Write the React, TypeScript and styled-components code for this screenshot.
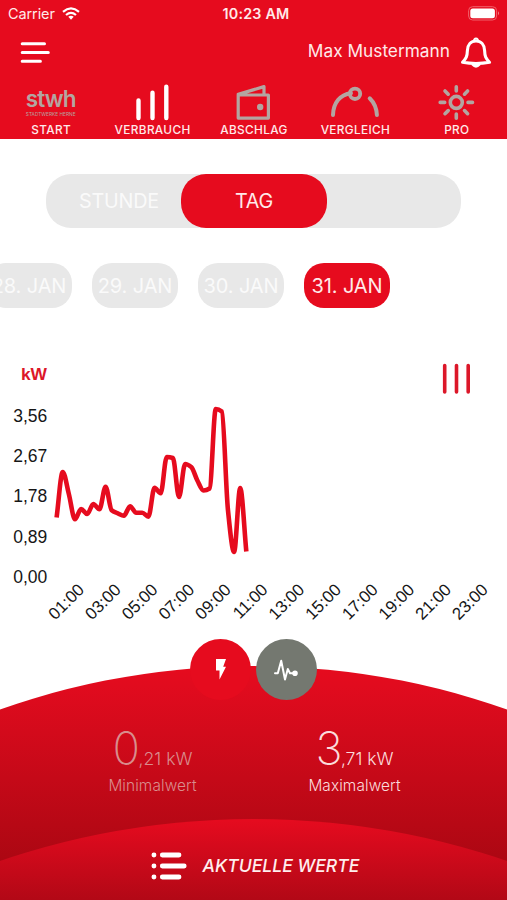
import React from "react";
import styled, { createGlobalStyle, css } from "styled-components";

const RED = "#e60b1e";
const MUTED = "#b3a5a1";
const TRACK = "#e8e8e8";

const GlobalStyle = createGlobalStyle`
  * { box-sizing: border-box; }
  body { margin: 0; background: #fff; }
`;

const Screen = styled.main`
  width: 507px;
  height: 900px;
  display: flex;
  flex-direction: column;
  overflow: hidden;
  background: #fff;
  font-family: Inter, "Liberation Sans", sans-serif;
`;

const Header = styled.header`
  height: 139px;
  flex: none;
  background: ${RED};
  color: #ffe9e9;
`;

const StatusBar = styled.div`
  height: 27px;
  padding: 0 7px 0 8px;
  display: grid;
  grid-template-columns: 1fr auto 1fr;
  align-items: center;
  font-size: 14.5px;
  line-height: 27px;
`;

const Carrier = styled.div`
  display: flex;
  align-items: center;
  gap: 7px;
  letter-spacing: -0.1px;
`;

const Clock = styled.div`
  font-weight: 600;
  font-size: 14.3px;
  letter-spacing: 0.2px;
  padding-left: 4px;
`;

const Battery = styled.svg`
  justify-self: end;
`;

const TitleBar = styled.div`
  height: 51px;
  padding: 0 14px 0 20px;
  display: flex;
  align-items: center;
`;

const UserName = styled.div`
  margin-left: auto;
  margin-right: 9px;
  font-size: 17.3px;
  line-height: 48px;
  height: 51px;
  letter-spacing: 0;
`;

const Tabs = styled.nav`
  height: 61px;
  display: grid;
  grid-template-columns: repeat(5, 1fr);
`;

const Tab = styled.div`
  display: flex;
  flex-direction: column;
  align-items: center;
`;

const Logo = styled.div`
  height: 43px;
  padding-top: 6px;
  display: flex;
  flex-direction: column;
  align-items: center;
  color: ${MUTED};
`;

const LogoName = styled.div`
  height: 27px;
  font-size: 22.5px;
  line-height: 30px;
  font-weight: 600;
  letter-spacing: -0.9px;
`;

const LogoCaption = styled.div`
  height: 6px;
  font-size: 4.8px;
  line-height: 6px;
  white-space: nowrap;
`;

const TabLabel = styled.span`
  font-size: 11.8px;
  font-weight: 500;
  line-height: 14px;
  margin-top: 2px;
  letter-spacing: 0.35px;
  padding-left: 1px;
  white-space: nowrap;
`;

const Segments = styled.div`
  flex: none;
  width: 415px;
  height: 54px;
  margin: 35px 0 0 46px;
  display: grid;
  grid-template-columns: 135px 146px 1fr;
  border-radius: 25px;
  background: ${TRACK};
`;

const Segment = styled.div<{ $active?: boolean }>`
  display: flex;
  align-items: center;
  justify-content: center;
  font-size: 19.8px;
  color: #fafafa;
  border-radius: 25px;
  letter-spacing: -0.2px;
  ${(p) =>
    p.$active
      ? css`
          background: ${RED};
          color: #ffe9e9;
        `
      : css`
          padding-left: 11px;
        `}
`;

const Days = styled.div`
  flex: none;
  height: 45px;
  margin: 35px 0 0 -14px;
  display: flex;
  gap: 20px;
`;

const Day = styled.div<{ $active?: boolean }>`
  flex: none;
  width: 86px;
  height: 45px;
  border-radius: 20px;
  display: flex;
  align-items: center;
  justify-content: center;
  white-space: nowrap;
  font-size: 20px;
  letter-spacing: -0.1px;
  background: ${(p) => (p.$active ? RED : TRACK)};
  color: ${(p) => (p.$active ? "#ffe9e9" : "#fafafa")};
`;

const Chart = styled.svg`
  flex: none;
  display: block;
  margin-top: 42px;
  font-family: "Liberation Sans", Arial, sans-serif;
`;

const Toggles = styled.div`
  flex: none;
  height: 61px;
  margin-top: -11px;
  display: flex;
  justify-content: center;
  gap: 4.5px;
  position: relative;
  z-index: 1;
`;

const Toggle = styled.div<{ $color: string }>`
  width: 61px;
  height: 61px;
  border-radius: 50%;
  background: ${(p) => p.$color};
  display: flex;
  align-items: center;
  justify-content: center;
`;

const Summary = styled.section`
  flex: none;
  height: 234px;
  margin-top: -34px;
  clip-path: circle(760px at 50% 760px);
  background: linear-gradient(#e60b1e 0, #e10b1e 20px, #a90712 205px);
`;

const Readings = styled.div`
  height: 153px;
  padding-top: 60px;
  display: flex;
  justify-content: center;
`;

const Reading = styled.div<{ $color: string }>`
  width: 202px;
  text-align: center;
  color: ${(p) => p.$color};
`;

const Value = styled.div`
  height: 46px;
  line-height: 46px;
  font-size: 17.6px;
  font-weight: 300;
  letter-spacing: 0;
`;

const Whole = styled.span`
  font-size: 45.5px;
  font-weight: 200;
  letter-spacing: -1.5px;
`;

const Caption = styled.div`
  font-size: 15.4px;
  font-weight: 300;
  line-height: 20px;
  margin-top: 4px;
  letter-spacing: 0.1px;
`;

const CurrentValues = styled.footer`
  height: 81px;
  padding: 12px 0 0 3px;
  display: flex;
  align-items: center;
  justify-content: center;
  gap: 16px;
  clip-path: circle(786px at 50% 786px);
  background: linear-gradient(#e60b1f, #b20816);
  color: #ffeeee;
  font-size: 17.6px;
  font-weight: 500;
  font-style: italic;
`;

const START_X = 56.6;
const STEP = 6.12;
const LEVELS = [
  167.5, 122, 144, 169.3, 159, 164, 154, 159.3, 136.7, 160.3, 163.3, 165.7, 156.3,
  162.7, 162.7, 166.7, 137.7, 143.3, 107, 108, 147, 114, 117, 130.5, 140.5, 138.5,
  59, 61.5, 160, 202, 138, 201.5,
];

/** Monotone cubic curve: flat at every peak and valley, so it never overshoots. */
function smoothLine() {
  const last = LEVELS.length - 1;
  const slope = LEVELS.map((y, i) => {
    if (i === 0 || i === last) return null;
    const before = y - LEVELS[i - 1];
    const after = LEVELS[i + 1] - y;
    return before * after <= 0 ? 0 : (2 * before * after) / (before + after);
  });
  slope[0] = LEVELS[1] - LEVELS[0];
  slope[last] = LEVELS[last] - LEVELS[last - 1];
  let d = `M${START_X} ${LEVELS[0]}`;
  for (let i = 1; i <= last; i++) {
    const x0 = START_X + (i - 1) * STEP;
    const x1 = x0 + STEP;
    const c0 = LEVELS[i - 1] + (slope[i - 1] ?? 0) / 3;
    const c1 = LEVELS[i] - (slope[i] ?? 0) / 3;
    d += ` C${x0 + STEP / 3} ${c0} ${x1 - STEP / 3} ${c1} ${x1} ${LEVELS[i]}`;
  }
  return d;
}

const HOURS = ["01:00", "03:00", "05:00", "07:00", "09:00", "11:00", "13:00", "15:00", "17:00", "19:00", "21:00", "23:00"];
const SCALE = ["3,56", "2,67", "1,78", "0,89", "0,00"];

const line = { fill: "none", strokeLinecap: "round", strokeLinejoin: "round" } as const;

export default function App() {
  return (
    <>
      <GlobalStyle />
      <Screen>
        <Header>
          <StatusBar>
            <Carrier>
              Carrier
              <svg width="18" height="13" viewBox="0 0 18 13" fill="none" stroke="#fff" strokeWidth="2.2">
                <path d="M1 4.8Q9-2 17 4.8" />
                <path d="M4 8Q9 3.8 14 8" />
                <path d="M6.3 9.8Q9 7.6 11.7 9.8L9 12.7Z" fill="#fff" stroke="none" />
              </svg>
            </Carrier>
            <Clock>10:23 AM</Clock>
            <Battery width="32" height="15" viewBox="0 0 32 15">
              <rect x="0.6" y="0.7" width="28" height="13.3" rx="4" fill="none" stroke="#f0606b" />
              <rect x="2.3" y="2.5" width="24.6" height="9.8" rx="2.5" fill="#fff" />
              <path d="M30 5.3Q32 7.3 30 9.3Z" fill="#f58088" />
            </Battery>
          </StatusBar>
          <TitleBar>
            <svg width="32" height="24" viewBox="0 0 32 24" {...line} stroke="#fff" strokeWidth="3">
              <path d="M2.2 2.7H24.5M2.2 11.5H28.3M2.2 20.2H20.4" />
            </svg>
            <UserName>Max Mustermann</UserName>
            <svg width="34" height="34" viewBox="0 0 34 34" {...line} stroke="#fff" strokeWidth="3.1">
              <path d="M3.5 26.3C7.3 22.5 8.2 20.5 8.4 14.5C8.6 8.5 12 5 17 5S25.4 8.5 25.6 14.5C25.8 20.5 26.7 22.5 30.5 26.3Q17 28.6 3.5 26.3Z" />
              <path d="M15 3.6Q17 1.2 19 3.6M13.2 28.7Q17 33 20.8 28.7Z" fill="#fff" strokeWidth="1.6" />
            </svg>
          </TitleBar>
          <Tabs>
            <Tab>
              <Logo>
                <LogoName>stwh</LogoName>
                <LogoCaption>STADTWERKE HERNE</LogoCaption>
              </Logo>
              <TabLabel>START</TabLabel>
            </Tab>
            <Tab>
              <svg width="40" height="43" viewBox="0 0 40 43" {...line} stroke="#fff" strokeWidth="4.4">
                <path d="M6.5 22.5V40M20.5 14.7V40M34.3 8.7V40" />
              </svg>
              <TabLabel>VERBRAUCH</TabLabel>
            </Tab>
            <Tab>
              <svg width="40" height="43" viewBox="0 0 40 43" {...line} stroke={MUTED} strokeWidth="3.2">
                <path d="M5.2 17H35.4V40.1H5.2ZM5.2 16.4L31 8.6V17" />
                <circle cx="27.2" cy="29" r="3.2" fill={MUTED} stroke="none" />
              </svg>
              <TabLabel>ABSCHLAG</TabLabel>
            </Tab>
            <Tab>
              <svg width="52" height="43" viewBox="0 0 52 43" {...line} stroke={MUTED} strokeWidth="4">
                <path d="M4 37C4.3 25 11 16.5 22 15.2M40.7 20.3C45.3 24.8 47.5 30 47.9 37" />
                <circle cx="26" cy="15.8" r="5.2" strokeWidth="3.9" />
              </svg>
              <TabLabel>VERGLEICH</TabLabel>
            </Tab>
            <Tab>
              <svg width="40" height="43" viewBox="0 0 40 43" {...line} stroke={MUTED} strokeWidth="3.6">
                <circle cx="20.3" cy="24.4" r="6" />
                <path d="M20.3 8.7V13M20.3 36V40.2M4.2 24.4H8.7M32 24.4H36.5M9 13L12.2 16.2M28.5 32.6L31.6 35.7M9 35.7L12.2 32.6M28.5 16.2L31.6 13" />
              </svg>
              <TabLabel>PRO</TabLabel>
            </Tab>
          </Tabs>
        </Header>

        <Segments>
          <Segment>STUNDE</Segment>
          <Segment $active>TAG</Segment>
        </Segments>

        <Days>
          <Day>28. JAN</Day>
          <Day>29. JAN</Day>
          <Day>30. JAN</Day>
          <Day $active>31. JAN</Day>
        </Days>

        <Chart width="507" height="300" viewBox="0 0 507 300">
          <text x="47" y="30" textAnchor="end" fontSize="17.4" fontWeight="700" fill="#dc1729">kW</text>
          {SCALE.map((s, i) => (
            <text key={s} x="47.3" y={71.6 + i * 40.4} textAnchor="end" fontSize="17.5" fill="#161616">{s}</text>
          ))}
          {HOURS.map((h, i) => (
            <text key={h} transform={`translate(${85.2 + i * 36.7} 240.8) rotate(-45)`} textAnchor="end" fontSize="16.9" fill="#161616">{h}</text>
          ))}
          <path d="M444.7 15.5V42M456.5 15.5V42M468.2 15.5V42" {...line} stroke="#dc1729" strokeWidth="3.6" />
          <path d={smoothLine()} fill="none" stroke={RED} strokeWidth="4.6" />
        </Chart>

        <Toggles>
          <Toggle $color={RED}>
            <svg width="14" height="22" viewBox="0 0 14 22" fill="#fff">
              <path d="M2 0H12L9.2 7.7H12L5.5 20.5V11.5H2Z" />
            </svg>
          </Toggle>
          <Toggle $color="#747870">
            <svg width="26" height="24" viewBox="0 0 26 24" {...line} stroke="#fff" strokeWidth="2">
              <path d="M2 15.2H4.8L8.2 2.8L12 21.5L14.8 11L17 15.2H21" />
              <circle cx="22" cy="15.2" r="1.8" fill="#fff" />
            </svg>
          </Toggle>
        </Toggles>

        <Summary>
          <Readings>
            <Reading $color="#d98d8d">
              <Value><Whole>0</Whole>,21 kW</Value>
              <Caption>Minimalwert</Caption>
            </Reading>
            <Reading $color="#fbdcdc">
              <Value><Whole>3</Whole>,71 kW</Value>
              <Caption>Maximalwert</Caption>
            </Reading>
          </Readings>
          <CurrentValues>
            <svg width="36" height="30" viewBox="0 0 36 30" {...line} stroke="#fff" strokeWidth="4.8">
              <path d="M11.3 4H28M11.3 15H33.2M11.3 26H28M2.9 4H3M2.9 15H3M2.9 26H3" />
            </svg>
            AKTUELLE WERTE
          </CurrentValues>
        </Summary>
      </Screen>
    </>
  );
}
